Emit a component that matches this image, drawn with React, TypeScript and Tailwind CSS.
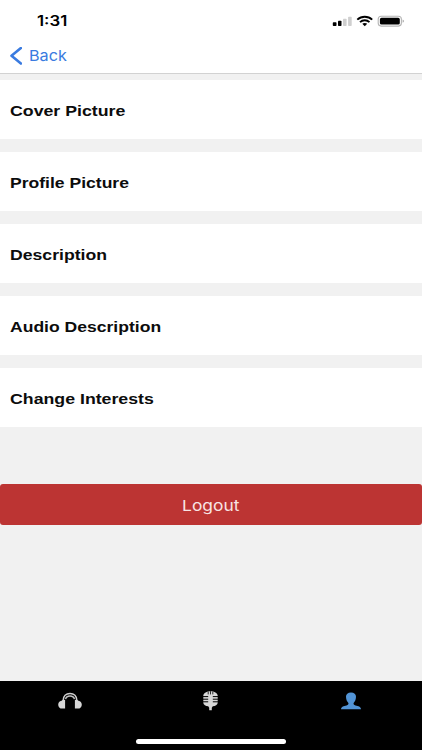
import { ReactNode } from "react";

const settings = [
  { label: "Cover Picture", scale: "scale-x-[1.144]" },
  { label: "Profile Picture", scale: "scale-x-[1.132]" },
  { label: "Description", scale: "scale-x-[1.137]" },
  { label: "Audio Description", scale: "scale-x-[1.132]" },
  { label: "Change Interests", scale: "scale-x-[1.144]" },
];

export default function App() {
  return (
    <div className="flex h-[750px] w-[422px] flex-col overflow-hidden bg-[#f1f1f1] font-['Inter',sans-serif]">
      <Header />
      <main className="flex grow flex-col pt-[6px]">
        <div className="flex flex-col gap-[13px]">
          {settings.map((item) => (
            <SettingRow key={item.label} scale={item.scale}>
              {item.label}
            </SettingRow>
          ))}
        </div>
        <LogoutButton />
      </main>
      <TabBar />
    </div>
  );
}

function Header() {
  return (
    <header className="flex h-[74px] shrink-0 flex-col border-b border-[#d2d2d2] bg-white">
      <div className="flex h-[41px] items-center justify-between pr-[17px] pl-[37px]">
        <span className="origin-left scale-x-[1.2] text-[14px] leading-[20px] font-semibold text-black">
          1:31
        </span>
        <StatusIcons />
      </div>
      <button className="flex h-[29px] items-center pl-[10px] text-[#3a7be0]">
        <svg width="12" height="18" viewBox="0 0 12 18" fill="none">
          <path
            d="M10.9 1.1 1.5 8.8l9.4 7.7"
            stroke="currentColor"
            strokeWidth="2.6"
            strokeLinecap="round"
            strokeLinejoin="round"
          />
        </svg>
        <span className="ml-[7px] origin-left scale-x-[1.08] text-[15px] leading-[20px]">
          Back
        </span>
      </button>
    </header>
  );
}

function StatusIcons() {
  return (
    <svg width="73" height="14" viewBox="0 0 73 14">
      <rect x="0.8" y="8.3" width="3.7" height="3.7" rx="0.7" fill="#000" />
      <rect x="6" y="6.7" width="3.5" height="5.3" rx="0.7" fill="#000" />
      <rect x="11" y="4.8" width="3.6" height="7.2" rx="0.7" fill="#cfcfcf" />
      <rect x="16.1" y="2.7" width="3.6" height="9.3" rx="0.7" fill="#cfcfcf" />
      <g fill="none" stroke="#000" strokeWidth="1.9">
        <path d="M25.3 5.6C29.5 1.7 36 1.7 40.2 5.6" />
        <path d="M28 8.1C30.7 5.6 34.8 5.6 37.5 8.1" />
      </g>
      <path d="M30.3 9.8c1.4-1.2 3.5-1.2 4.9 0l-2.45 2.5z" fill="#000" />
      <rect
        x="46.2"
        y="2.3"
        width="23.2"
        height="9.8"
        rx="3"
        fill="#fff"
        stroke="#b5b5b5"
        strokeWidth="1.1"
      />
      <rect x="47.9" y="3.8" width="19.9" height="6.8" rx="1.6" fill="#000" />
      <path d="M70.7 5.6c1.5.5 1.5 2.7 0 3.2z" fill="#999" />
    </svg>
  );
}

function SettingRow({
  children,
  scale,
}: {
  children: ReactNode;
  scale: string;
}) {
  return (
    <button className="flex h-[59px] items-center bg-white pt-[3px] pl-[10px] text-left font-['Liberation_Sans',Arial,sans-serif]">
      <span
        className={`${scale} origin-left text-[15.5px] leading-[20px] font-bold text-[#0c0c0c]`}
      >
        {children}
      </span>
    </button>
  );
}

function LogoutButton() {
  return (
    <button className="mt-[57px] flex h-[41px] items-center justify-center rounded-[3px] bg-[#bc3433] pt-[2px] text-[#f8e5e5]">
      <span className="scale-x-[1.16] text-[15px] leading-[20px]">Logout</span>
    </button>
  );
}

function TabBar() {
  return (
    <nav className="flex h-[69px] shrink-0 flex-col items-center bg-black">
      <div className="grid h-[40px] w-full grid-cols-3 items-center justify-items-center">
        <HeadphonesIcon />
        <MicrophoneIcon />
        <PersonIcon />
      </div>
      <div className="mt-[18px] h-[4.5px] w-[150px] rounded-full bg-white" />
    </nav>
  );
}

function HeadphonesIcon() {
  return (
    <svg
      className="mr-px"
      width="24"
      height="18"
      viewBox="0 0 24 18"
      fill="none"
    >
      <path
        d="M5.2 10V8.4C5.2 4 8.2 1.5 12 1.5s6.8 2.5 6.8 6.9V10"
        stroke="#d0d0d0"
        strokeWidth="1.7"
      />
      <path
        d="M7.6 7.2C8 5 9.5 4 12 4s4 1 4.4 3.2"
        stroke="#c4c4c4"
        strokeWidth="1.4"
      />
      <path
        d="M4.3 8h2.8v8.6H4.2C1.8 16.6.2 15.1.2 12.7s1.7-3.9 4.1-4.1zM19.7 8h-2.8v8.6h2.9c2.4 0 4-1.5 4-3.9s-1.7-3.9-4.1-4.1z"
        fill="#d6d6d6"
      />
    </svg>
  );
}

function MicrophoneIcon() {
  return (
    <svg className="mr-px" width="17" height="20" viewBox="0 0 17 20">
      <path
        d="M8.5.3C4.6.3 1.8 2 1.3 4.6v7.3c.4 1.9 2.2 3 4.9 3.3l1 1.5v2.6h2.6v-2.6l1-1.5c2.7-.3 4.5-1.4 4.9-3.3V4.6C15.2 2 12.4.3 8.5.3z"
        fill="#d8d8d8"
      />
      <path
        d="M6.2.5v2.9M8.5.2v3.2M10.8.5v2.9"
        stroke="#000"
        strokeWidth="0.8"
      />
      <path
        d="M.8 5.6h5.4M10.8 5.6h5.4M.8 8.2h5.4M10.8 8.2h5.4M.8 10.8h5.4M10.8 10.8h5.4"
        stroke="#000"
        strokeWidth="1"
      />
    </svg>
  );
}

function PersonIcon() {
  return (
    <svg className="mr-px" width="20" height="18" viewBox="0 0 20 18">
      <path
        d="M10 .4C6.9.4 4.9 2 5 4.8c.1 2.7 1 4.9 2.4 6.3.3 1.2-.3 1.9-1.9 2.3l-3 .8C.9 14.7.1 15.8 0 17.2h20c-.1-1.4-.9-2.5-2.5-3l-3-.8c-1.6-.4-2.2-1.1-1.9-2.3C14 9.7 14.9 7.5 15 4.8 15.1 2 13.1.4 10 .4z"
        fill="#5294d6"
      />
    </svg>
  );
}
